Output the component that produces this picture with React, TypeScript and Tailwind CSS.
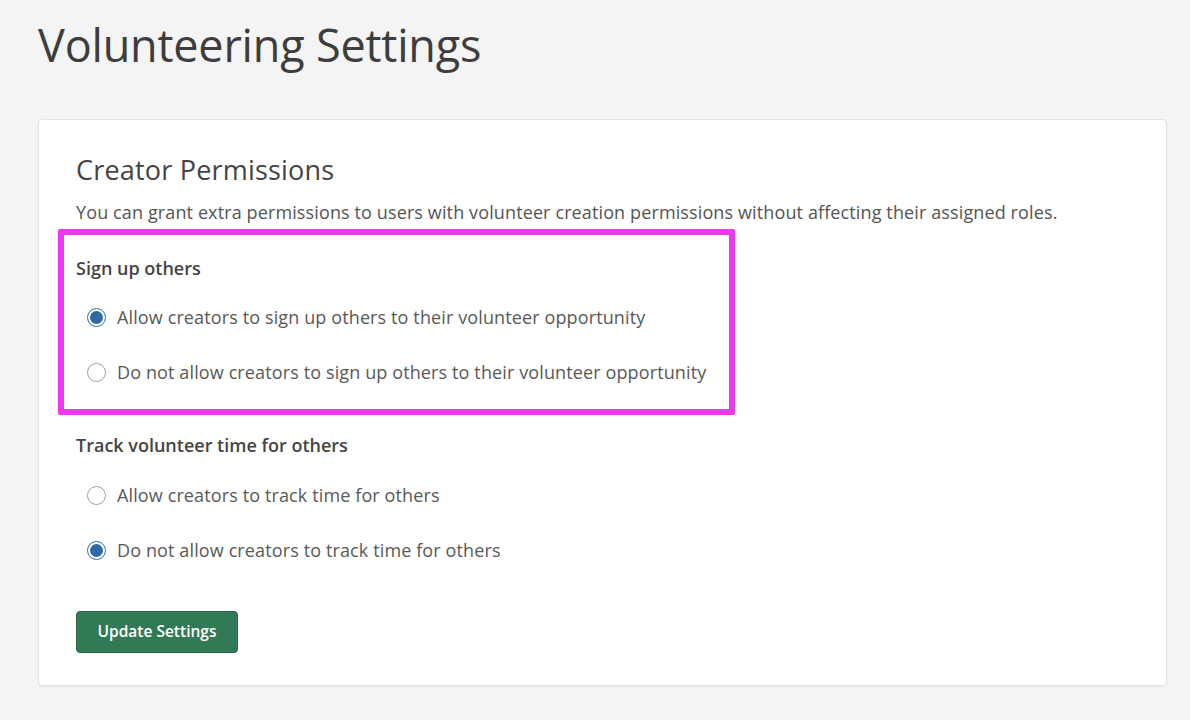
const options = {
  signUp: [
    { label: "Allow creators to sign up others to their volunteer opportunity", checked: true },
    { label: "Do not allow creators to sign up others to their volunteer opportunity", checked: false },
  ],
  trackTime: [
    { label: "Allow creators to track time for others", checked: false },
    { label: "Do not allow creators to track time for others", checked: true },
  ],
};

function Radio({ label, checked }: { label: string; checked: boolean }) {
  return (
    <label className="flex items-center h-[24px] pl-[11px] gap-[11px] text-[18px] tracking-[0.12px] text-[#595959]">
      {checked ? (
        <span className="w-[19px] h-[19px] rounded-full border border-[#2f6ea8] bg-white flex items-center justify-center shrink-0">
          <span className="w-[13px] h-[13px] rounded-full bg-[#2f6aa5]" />
        </span>
      ) : (
        <span className="w-[19px] h-[19px] rounded-full border border-[#a0a0a0] bg-white shrink-0" />
      )}
      <span>{label}</span>
    </label>
  );
}

export default function App() {
  return (
    <div className="min-h-[720px] bg-[#f4f4f4] pt-[17px] pl-[38px] font-['Open_Sans',sans-serif]">
      <h1 className="text-[45px] leading-[56px] text-[#3d3d3d] tracking-[-0.2px]">
        Volunteering Settings
      </h1>

      <div className="mt-[46px] w-[1129px] bg-white border border-[#e3e3e3] rounded-[4px] shadow-[0_1px_2px_rgba(0,0,0,0.06)] pt-[34px] pb-[32px] px-[37px]">
        <h2 className="text-[27px] leading-[32px] text-[#444] tracking-[0.2px]">Creator Permissions</h2>
        <p className="mt-[14px] text-[18px] leading-[24px] tracking-[0.12px] text-[#555]">
          You can grant extra permissions to users with volunteer creation permissions without affecting their assigned roles.
        </p>

        {/* highlighted section */}
        <div className="mt-[5px] -ml-[18px] w-[677px] border-[6px] border-[#ec38ee] rounded-[2px] pt-[21px] pb-[25px] pl-[12px]">
          <div className="text-[18px] leading-[24px] font-semibold text-[#444]">Sign up others</div>
          <div className="mt-[25px] flex flex-col gap-[31px]">
            {options.signUp.map((o) => (
              <Radio key={o.label} {...o} />
            ))}
          </div>
        </div>

        <div className="mt-[18px] text-[18px] leading-[24px] font-semibold text-[#444]">
          Track volunteer time for others
        </div>
        <div className="mt-[26px] flex flex-col gap-[31px]">
          {options.trackTime.map((o) => (
            <Radio key={o.label} {...o} />
          ))}
        </div>

        <button className="mt-[49px] w-[162px] h-[42px] rounded-[4px] bg-[#327a56] border border-[#2a6a4a] text-white text-[15.5px] font-semibold">
          Update Settings
        </button>
      </div>
    </div>
  );
}
